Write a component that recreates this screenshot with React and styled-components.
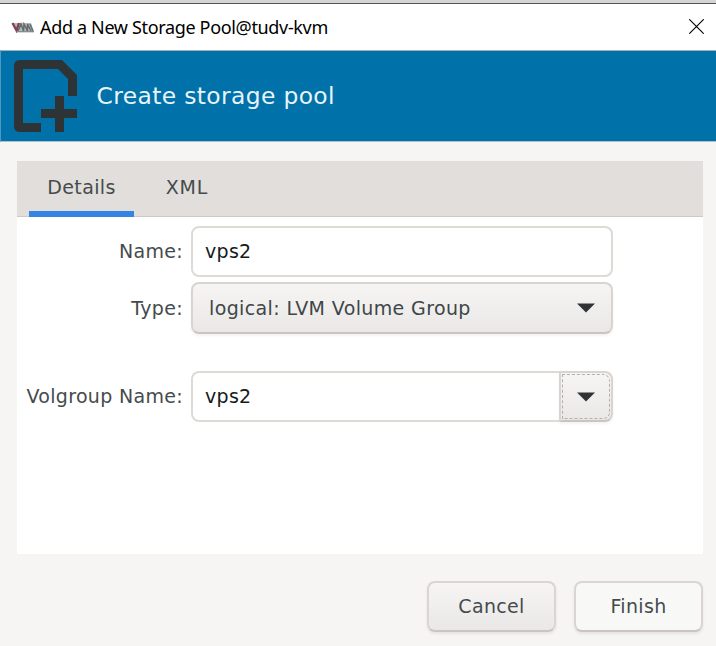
import React from "react";
import styled, { createGlobalStyle } from "styled-components";

const GlobalStyle = createGlobalStyle`
  * { box-sizing: border-box; }
  body { margin: 0; background: #f6f5f4; overflow: hidden; }
  button, input { font: inherit; color: inherit; margin: 0; }
`;

const Dialog = styled.div`
  width: 716px;
  height: 646px;
  display: flex;
  flex-direction: column;
  background: #f6f5f4;
  border-top: 3px solid #d4d4d4;
  color: #454b4d;
  font: 19px/24px "DejaVu Sans", sans-serif;
  letter-spacing: 0.2px;
`;

const TitleBar = styled.header`
  height: 47px;
  flex: none;
  display: flex;
  align-items: center;
  border-top: 1px solid #555659;
  background: #fff;
  padding: 0 12px 0 11px;
`;

const Title = styled.h1`
  flex: 1;
  margin: 0 0 0 6px;
  color: #000;
  font: 400 18px/24px "Noto Sans", sans-serif;
  letter-spacing: -0.34px;
  white-space: nowrap;
`;

const CloseButton = styled.button`
  display: flex;
  border: 0;
  padding: 0 0 1px;
  background: none;
`;

const Banner = styled.section`
  height: 92px;
  flex: none;
  display: flex;
  align-items: center;
  padding-left: 13px;
  border-top: 1px solid #a9b1b8;
  border-bottom: 1px solid #b4c0c7;
  border-left: 1px solid #4b9ac2;
  background: #0071a9;
`;

const BannerText = styled.h2`
  margin: 0 0 0 18.6px;
  color: #e9f4fa;
  font-size: 23.4px;
  line-height: 30px;
  font-weight: 400;
  letter-spacing: 0.36px;
`;

const Notebook = styled.main`
  margin: 19px 13px 0 17px;
  height: 393px;
  flex: none;
  background: #fff;
`;

const TabBar = styled.nav`
  height: 56px;
  display: flex;
  padding-left: 12px;
  background: #e1dedb;
  border-bottom: 1px solid #cfc8c3;
`;

const Tab = styled.button`
  width: ${(p) => p.$width}px;
  height: 55px;
  margin-right: 14px;
  padding: 2px 0 0;
  border: 0;
  border-bottom: 5px solid ${(p) => (p.$active ? "#3584e4" : "transparent")};
  box-shadow: 0 1px ${(p) => (p.$active ? "#3584e4" : "transparent")};
  background: none;
  color: #454b4d;
  letter-spacing: ${(p) => p.$spacing}px;
`;

const Form = styled.form`
  display: grid;
  grid-template-columns: 166px 422px;
  grid-template-rows: 51px 52px 51px;
  column-gap: 8px;
  padding-top: 9px;
`;

const Label = styled.label`
  align-self: center;
  padding: 0 0 1px;
  text-align: right;
  white-space: nowrap;
  letter-spacing: 0.32px;
`;

const rows = { 1: "0", 2: "5px 0 -5px", 3: "42px 0 -42px" };

const FieldRow = styled.div`
  display: grid;
  grid-column: 1 / -1;
  grid-template-columns: subgrid;
  margin: ${(p) => rows[p.$row]};
`;

const Entry = styled.input`
  width: 100%;
  height: 51px;
  padding: 0 12px 1px;
  border: 2px solid #dedad6;
  border-radius: 8px;
  background: #fff;
  color: #16191a;
  outline: 0;
  letter-spacing: 0.3px;
`;

const Combo = styled.button`
  width: 100%;
  height: 52px;
  display: flex;
  align-items: center;
  justify-content: space-between;
  padding: 0 16px;
  border: 2px solid #d9d4d0;
  border-bottom-color: #cbc4bf;
  border-radius: 8px;
  background: linear-gradient(#f6f5f4, #eae8e6);
  box-shadow: 0 2px 3px rgba(0, 0, 0, 0.05);
  color: #3f4648;
  letter-spacing: 0.37px;
`;

const EditableCombo = styled.div`
  display: flex;

  ${Entry} {
    flex: 1;
    min-width: 0;
    border-right: 0;
    border-radius: 8px 0 0 8px;
  }
`;

const DropButton = styled.button`
  width: 54px;
  height: 51px;
  padding: 1px;
  border: 2px solid #d9d4d0;
  border-bottom-color: #cbc4bf;
  border-radius: 0 8px 8px 0;
  background: linear-gradient(#f6f5f4, #eae8e6);
  box-shadow: 0 2px 3px rgba(0, 0, 0, 0.05);
`;

const FocusRing = styled.span`
  height: 100%;
  display: flex;
  align-items: center;
  justify-content: center;
  border: 1px dashed #b0b0ae;
  border-radius: 0 7px 7px 0;
`;

const Actions = styled.footer`
  display: flex;
  justify-content: flex-end;
  gap: 18px;
  padding: 27px 13px 0;
`;

const ActionButton = styled.button`
  width: 129px;
  height: 51px;
  padding: 0 0 2px;
  border: 2px solid #dad5d1;
  border-bottom-color: #cbc4bf;
  border-radius: 8px;
  background: ${(p) => (p.$plain ? "#f8f8f6" : "linear-gradient(#f6f5f4, #eae8e6)")};
  box-shadow: 0 2px 3px rgba(0, 0, 0, 0.07);
  color: #454b4d;
  letter-spacing: 0.35px;
`;

const VmmLogo = () => (
  <svg width="23" height="11" viewBox="0 0 23 11">
    <path d="M1 1H20L23 10H6Z" fill="#b4b8ba" />
    <path d="M1.5 1L5.5 8.5L8 1" fill="none" stroke="#884052" strokeWidth="2.3" />
    <path d="M7 9L10 2L12.5 9L13 2L16.5 9L16.5 2L20 9M19 2L22 9" fill="none" stroke="#656c70" strokeWidth="1.5" />
    <path d="M5 9.8H23" stroke="#777b7d" />
  </svg>
);

const NewDocument = () => (
  <svg width="64" height="74" viewBox="0 0 64 74" fill="#2e3436">
    <path d="M6 1H48L63 16V37H54V20L44 10H9V64H27V73H6Q0 73 0 67V7Q0 1 6 1Z" />
    <path d="M41 37H50V50H63V59H50V73H41V59H27V50H41Z" />
  </svg>
);

const Arrow = () => (
  <svg width="18" height="10" viewBox="0 0 18 10">
    <path d="M0 .5H18L9 9.5Z" fill="#2e3436" />
  </svg>
);

export default function App() {
  return (
    <>
      <GlobalStyle />
      <Dialog>
        <TitleBar>
          <VmmLogo />
          <Title>Add a New Storage Pool@tudv-kvm</Title>
          <CloseButton aria-label="Close">
            <svg width="15" height="15" viewBox="0 0 15 15">
              <path d="M.3.3L14.7 14.7M14.7.3L.3 14.7" stroke="#000" strokeWidth="1.1" />
            </svg>
          </CloseButton>
        </TitleBar>
        <Banner>
          <NewDocument />
          <BannerText>Create storage pool</BannerText>
        </Banner>
        <Notebook>
          <TabBar>
            <Tab $width={105} $active $spacing={0.4}>Details</Tab>
            <Tab $width={78} $spacing={0.8}>XML</Tab>
          </TabBar>
          <Form>
            <FieldRow $row={1}>
              <Label htmlFor="name">Name:</Label>
              <Entry id="name" defaultValue="vps2" />
            </FieldRow>
            <FieldRow $row={2}>
              <Label>Type:</Label>
              <Combo type="button">
                <span>logical: LVM Volume Group</span>
                <Arrow />
              </Combo>
            </FieldRow>
            <FieldRow $row={3}>
              <Label htmlFor="volgroup">Volgroup Name:</Label>
              <EditableCombo>
                <Entry id="volgroup" defaultValue="vps2" />
                <DropButton type="button" aria-label="Choose volume group">
                  <FocusRing><Arrow /></FocusRing>
                </DropButton>
              </EditableCombo>
            </FieldRow>
          </Form>
        </Notebook>
        <Actions>
          <ActionButton>Cancel</ActionButton>
          <ActionButton $plain>Finish</ActionButton>
        </Actions>
      </Dialog>
    </>
  );
}
